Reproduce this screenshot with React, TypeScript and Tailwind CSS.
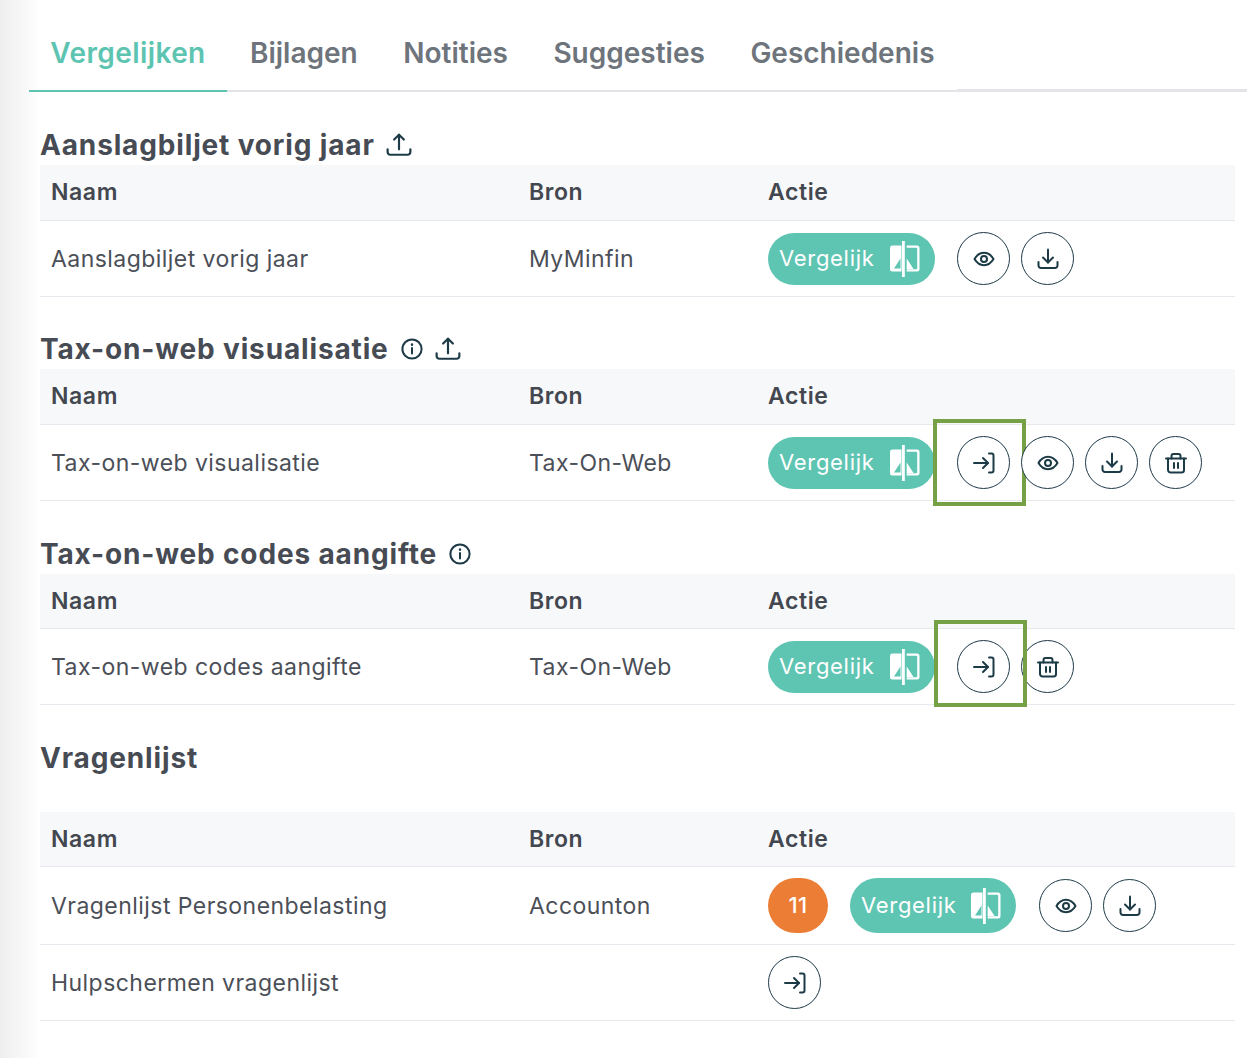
const tabs = ["Bijlagen", "Notities", "Suggesties", "Geschiedenis"];

const Stroke = ({ children, size = 24 }: { children: React.ReactNode; size?: number }) => (
  <svg width={size} height={size} viewBox="0 0 24 24" fill="none" stroke="#1d3a47" strokeWidth="2" strokeLinecap="round" strokeLinejoin="round">
    {children}
  </svg>
);

const UploadIcon = () => (
  <Stroke size={26}>
    <path d="M1.500 16v2.500A2.500 2.500 0 0 0 4 21h16a2.500 2.500 0 0 0 2.500-2.500V16" />
    <path d="M7.500 7 12 2.500 16.500 7" />
    <path d="M12 2.500V16" />
  </Stroke>
);

const InfoIcon = () => (
  <Stroke size={24}>
    <circle cx="12" cy="12" r="9.600" />
    <path d="M12 11v5.500" />
    <path d="M12 7.500v.2" strokeWidth="2.400" />
  </Stroke>
);

const EyeIcon = () => (
  <Stroke>
    <path d="M2.500 12C5 7.800 8.200 5.800 12 5.800s7 2 9.500 6.200c-2.500 4.200-5.700 6.200-9.500 6.200S5 16.200 2.500 12Z" />
    <circle cx="12" cy="12" r="3" />
  </Stroke>
);

const DownloadIcon = () => (
  <Stroke>
    <path d="M2.500 15v3.500A2.500 2.500 0 0 0 5 21h14a2.500 2.500 0 0 0 2.500-2.500V15" />
    <path d="M7 10.500l5 5 5-5" />
    <path d="M12 2.500v13" />
  </Stroke>
);

const EnterIcon = () => (
  <Stroke>
    <path d="M2 12h14" />
    <path d="M11 7l5 5-5 5" />
    <path d="M17 2.500h2.500a2 2 0 0 1 2 2v15a2 2 0 0 1-2 2H17" />
  </Stroke>
);

const TrashIcon = () => (
  <Stroke>
    <path d="M2 7.500h20" />
    <path d="M7.500 7.500V5a2 2 0 0 1 2-2h5a2 2 0 0 1 2 2v2.500" />
    <path d="M4 7.500V19a2.500 2.500 0 0 0 2.500 2.500h11A2.500 2.500 0 0 0 20 19V7.500" />
    <path d="M10 12v5" />
    <path d="M14 12v5" />
  </Stroke>
);

const CompareIcon = () => (
  <svg width="30" height="36" viewBox="0 0 30 36">
    <path fillRule="evenodd" fill="#fff" d="M2.500 4.500h9v26h-9A2.500 2.500 0 0 1 0 28V7a2.500 2.500 0 0 1 2.500-2.500Zm8 13-6.500 10h6.500Z" />
    <rect x="12" y="0" width="2.800" height="36" fill="#fff" />
    <path fill="#fff" d="M16.700 4.500H27A2.500 2.500 0 0 1 29.500 7v21a2.500 2.500 0 0 1-2.500 2.500H16.700v-2.300h9.300a1.200 1.200 0 0 0 1.200-1.200V8a1.200 1.200 0 0 0-1.200-1.200h-9.300Z" />
    <path fill="#fff" d="M16.700 17.500l6.800 10.500h-6.800Z" />
  </svg>
);

const Circle = ({ children, mark }: { children: React.ReactNode; mark?: string }) => (
  <div className="relative flex h-[53px] w-[53px] shrink-0 items-center justify-center rounded-full border border-[#1d3a47] bg-white">
    {children}
    {mark && <div className={mark} />}
  </div>
);

const Compare = ({ tall }: { tall?: boolean }) => (
  <div className={`flex shrink-0 items-center justify-between rounded-full bg-[#5fc5b3] pl-[11px] pr-[15px] text-[22px] tracking-[0.7px] text-white ${tall ? "mr-[12px] h-[55px] w-[166px]" : "mr-[11px] h-[52px] w-[167px]"}`}>
    <span>Vergelijk</span>
    <CompareIcon />
  </div>
);

const Head = ({ h = "h-[55px]" }: { h?: string }) => (
  <div className={`grid grid-cols-[478px_239px_1fr] items-center border-b border-[#e8e9ee] bg-[#f7f8fa] pl-[11px] text-[23px] font-semibold tracking-[0.6px] text-[#43474f] ${h}`}>
    <span>Naam</span>
    <span>Bron</span>
    <span>Actie</span>
  </div>
);

const Row = ({ name, source, children, h = "h-[76px]" }: { name: string; source?: string; children: React.ReactNode; h?: string }) => (
  <div className={`grid grid-cols-[478px_239px_1fr] items-center border-b border-[#e8e9ee] pl-[11px] text-[23px] tracking-[0.45px] text-[#4b4f57] ${h}`}>
    <span className="pt-px">{name}</span>
    <span className="pt-px">{source}</span>
    <div className="flex items-center gap-[11px]">{children}</div>
  </div>
);

const Title = ({ children, icons }: { children: string; icons?: React.ReactNode }) => (
  <h2 className="flex h-[40px] items-center gap-[11px] text-[28px] font-bold tracking-[0.85px] text-[#474b54]">
    {children}
    {icons}
  </h2>
);

const box = "absolute h-[87px] w-[93px] border-[4px] border-[#76a045]";

export default function App() {
  return (
    <div className="min-h-[1058px] w-[1256px] overflow-hidden bg-[linear-gradient(90deg,#eeeeee,#ffffff_40px)] font-['Inter',sans-serif]">
      <nav className="ml-[29px] flex h-[92px] w-[1218px] items-stretch">
        <div className="flex w-[198px] items-center justify-center border-b-2 border-[#5cc4b1] pt-[16px] text-[28px] font-semibold tracking-[0.4px] text-[#5cc4b1]">
          Vergelijken
        </div>
        <div className="flex w-[730px] items-center gap-[45.500px] border-b-2 border-[#e2e4e8] pt-[16px] pl-[23px] text-[28px] font-semibold text-[#6e747c]">
          {tabs.map((t) => (
            <span key={t}>{t}</span>
          ))}
        </div>
        <div className="flex-1 border-b-[3px] border-[#e2e4e8]" />
      </nav>

      <main className="ml-[40px] w-[1195px] pt-[33px]">
        <section className="h-[204px]">
          <Title icons={<UploadIcon />}>Aanslagbiljet vorig jaar</Title>
          <Head h="h-[56px]" />
          <Row name="Aanslagbiljet vorig jaar" source="MyMinfin">
            <Compare />
            <Circle><EyeIcon /></Circle>
            <Circle><DownloadIcon /></Circle>
          </Row>
        </section>

        <section className="h-[205px]">
          <Title icons={<><InfoIcon /><UploadIcon /></>}>Tax-on-web visualisatie</Title>
          <Head h="h-[56px]" />
          <Row name="Tax-on-web visualisatie" source="Tax-On-Web">
            <Compare />
            <Circle mark={`${box} -top-[18px] -left-[25px]`}><EnterIcon /></Circle>
            <Circle><EyeIcon /></Circle>
            <Circle><DownloadIcon /></Circle>
            <Circle><TrashIcon /></Circle>
          </Row>
        </section>

        <section className="h-[204px]">
          <Title icons={<InfoIcon />}>Tax-on-web codes aangifte</Title>
          <Head />
          <Row name="Tax-on-web codes aangifte" source="Tax-On-Web">
            <Compare />
            <Circle mark={`${box} -top-[21px] -left-[24px] z-10`}><EnterIcon /></Circle>
            <Circle><TrashIcon /></Circle>
          </Row>
        </section>

        <section>
          <Title>Vragenlijst</Title>
          <div className="h-[34px]" />
          <Head />
          <Row name="Vragenlijst Personenbelasting" source="Accounton" h="h-[78px]">
            <div className="mr-[11px] flex h-[55px] w-[60px] items-center justify-center rounded-full bg-[#ec7d35] text-[22px] font-medium text-white">11</div>
            <Compare tall />
            <Circle><EyeIcon /></Circle>
            <Circle><DownloadIcon /></Circle>
          </Row>
          <Row name="Hulpschermen vragenlijst">
            <Circle><EnterIcon /></Circle>
          </Row>
        </section>
      </main>
    </div>
  );
}
